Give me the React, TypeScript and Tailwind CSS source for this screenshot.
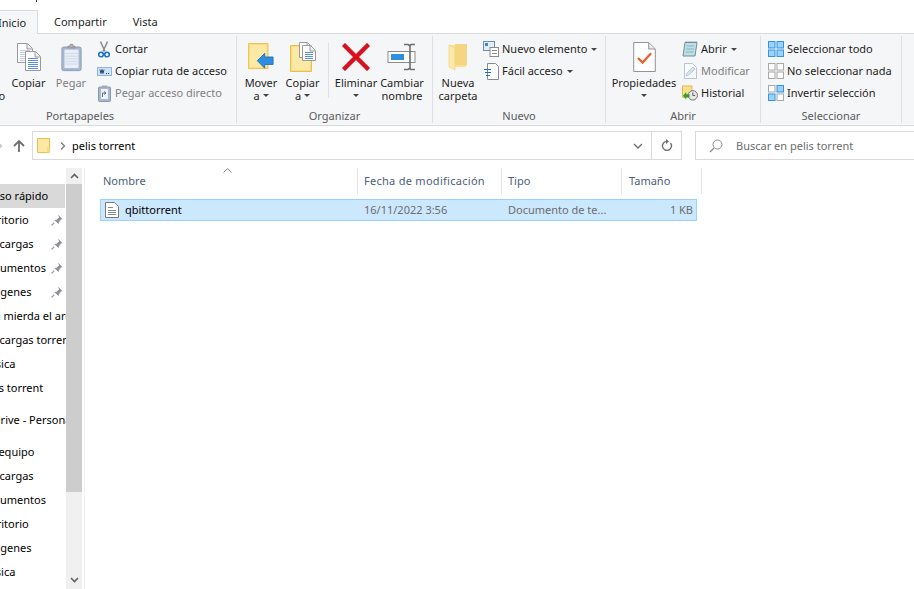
import type { ReactNode } from "react";

const Doc = ({ x, y, w = 22, h = 28, lines = "#8aa6d8", stroke = "#9a9a9a" }: { x: number; y: number; w?: number; h?: number; lines?: string; stroke?: string }) => (
  <g>
    <path d={`M${x + 0.5} ${y + 0.5}h${w - 6}l5 5v${h - 6}h-${w - 1}z`} fill="#fff" stroke={stroke} />
    <path d={`M${x + w - 6} ${y + 1}v5h5`} fill="#eee" stroke={stroke} />
    {[7, 9, 11, 13, 15, 17, 19, 21].filter((l) => l < h - 1).map((l) => (
      <path key={l} d={`M${x + 3} ${y + l}.5h${w - 6}`} stroke={lines} />
    ))}
  </g>
);

const CopyIcon = () => (
  <svg width="24" height="28" viewBox="0 0 24 28">
    <Doc x={0} y={0} w={16} h={20} lines="#c3cfe4" />
    <Doc x={8} y={8} w={16} h={20} lines="#5b8fe0" />
  </svg>
);

const PasteIcon = () => (
  <svg width="21" height="29" viewBox="0 0 24 32">
    <rect x="1" y="4" width="22" height="27" rx="2" fill="#a9b8d0" stroke="#8898b2" />
    <rect x="4" y="7" width="16" height="21" fill="#e9eef7" />
    {[11, 14, 17, 20, 23].map((l) => (
      <path key={l} d={`M5 ${l}.5h14`} stroke="#ccd6e8" />
    ))}
    <path d="M8 5V3h2.5V1h3v2H16v2z" fill="#b3b3b3" stroke="#8f8f8f" />
  </svg>
);

const Scissors = () => (
  <svg width="12" height="17" viewBox="0 0 12 17">
    <path d="M2.500 0.500l4.500 10M9.500 0.500L5 10.500" stroke="#8a8a8a" strokeWidth="1.500" fill="none" />
    <circle cx="3" cy="13.500" r="2.300" fill="none" stroke="#1f6fc4" strokeWidth="1.600" />
    <circle cx="9" cy="13.500" r="2.300" fill="none" stroke="#1f6fc4" strokeWidth="1.600" />
  </svg>
);

const PathIcon = () => (
  <svg width="15" height="9" viewBox="0 0 15 9">
    <rect x="0.5" y="0.5" width="14" height="8" fill="#cfe3f8" stroke="#8fb4dc" />
    <path d="M3 2.500l1 4 1-4 1 4 1-4" stroke="#27486e" fill="none" />
    <path d="M9 6.500h1M11 6.500h1" stroke="#27486e" />
  </svg>
);

const ShortcutIcon = () => (
  <svg width="13" height="17" viewBox="0 0 13 17">
    <rect x="0.5" y="2" width="12" height="14.5" rx="1" fill="#a9b8d0" stroke="#8898b2" />
    <rect x="3" y="4" width="7" height="10" fill="#eef2f8" />
    <path d="M4.500 12V8h3M6 6.500L8 8 6 9.500" stroke="#5f6f86" fill="none" />
    <rect x="4" y="0.5" width="5" height="2.5" fill="#aaa" />
  </svg>
);

const MoveIcon = () => (
  <svg width="26" height="28" viewBox="0 0 28 30">
    <path d="M0.5 0.5h21v27h-21z" fill="#fbdc7c" stroke="#e8c050" />
    <path d="M2 2h18v24H2z" fill="#fde9a6" />
    <path d="M10 19l8-8v4h9v8h-9v4z" fill="#2f8ee0" stroke="#1e73bd" />
  </svg>
);

const CopyToIcon = () => (
  <svg width="26" height="30" viewBox="0 0 26 30">
    <path d="M0.5 3.500h21v26h-21z" fill="#fbdc7c" stroke="#e8c050" />
    <path d="M2 5h18v23H2z" fill="#fde9a6" />
    <Doc x={9} y={0} w={14} h={16} lines="#b8c6de" />
    <Doc x={12} y={3} w={14} h={16} lines="#5b8fe0" />
  </svg>
);

const DeleteIcon = () => (
  <svg width="28" height="28" viewBox="0 0 28 28">
    <path d="M3 3l22 22M25 3L3 25" stroke="#d8111f" strokeWidth="4.4" strokeLinecap="square" />
  </svg>
);

const RenameIcon = () => (
  <svg width="30" height="28" viewBox="0 0 30 28">
    <rect x="1" y="8.5" width="27" height="11" fill="#fff" stroke="#8b8b8b" />
    <rect x="4" y="11" width="13" height="6" fill="#2f8ee0" />
    <path d="M17 1.5h4l1.5 1 1.5-1h4M23 2v24M17 26.5h4l1.5-1 1.5 1h4" stroke="#6f6f6f" strokeWidth="1.6" fill="none" />
  </svg>
);

const FolderIcon = () => (
  <svg width="20" height="28" viewBox="0 0 20 28">
    <path d="M1 2h17v22H1z" fill="#fbdf8c" />
    <path d="M7 1h12v21H7z" fill="#f5d580" />
    <path d="M1 2l6 3v22l-6-3z" fill="#fde9a6" stroke="#efd07c" strokeWidth="0.6" />
  </svg>
);

const NewItemIcon = () => (
  <svg width="16" height="16" viewBox="0 0 16 16">
    <rect x="0.5" y="0.5" width="11" height="9" fill="#e3edf8" stroke="#6f8bad" />
    <rect x="2" y="2" width="3" height="3" fill="#3a86cf" />
    <rect x="7" y="6.5" width="8.5" height="9" fill="#fff" stroke="#8a8a8a" />
    <path d="M9 9.5h5M9 12.5h5" stroke="#8a8a8a" />
  </svg>
);

const EasyAccessIcon = () => (
  <svg width="15" height="17" viewBox="0 0 15 17">
    <path d="M3.5 0.5h8l3 3v13h-11z" fill="#fff" stroke="#8a8a8a" />
    <path d="M0 6.5h7M1 9.5h6M2 12.5h4" stroke="#1f6fc4" />
  </svg>
);

const PropertiesIcon = () => (
  <svg width="23" height="30" viewBox="0 0 24 32">
    <path d="M0.5 0.5h16l7 7v24h-23z" fill="#fff" stroke="#8a8a8a" />
    <path d="M16.5 1v6.5H23" fill="#eee" stroke="#8a8a8a" />
    <path d="M5 17l5 5 9-10" stroke="#e8612c" strokeWidth="2.4" fill="none" />
  </svg>
);

const OpenIcon = () => (
  <svg width="16" height="16" viewBox="0 0 16 16">
    <path d="M3 1.5h12l-2 13.5H1z" fill="#bfe0e6" stroke="#6f8f96" />
    <path d="M4 1v-0.5M6 1v-0.5M8 1v-0.5M10 1v-0.5M12 1v-0.5M14 1v-0.5" stroke="#555" />
    <path d="M4.5 5h8M4 8h8M3.5 11h8" stroke="#88b5bd" />
  </svg>
);

const EditIcon = () => (
  <svg width="15" height="16" viewBox="0 0 15 16">
    <path d="M1.5 0.5h8l4 4v11h-12z" fill="#fafafa" stroke="#b7c4d8" />
    <path d="M3 13l1-3 6-6 2 2-6 6z" fill="#d5e2f4" stroke="#a9bbd6" strokeWidth="0.7" />
  </svg>
);

const HistoryIcon = () => (
  <svg width="17" height="16" viewBox="0 0 17 16">
    <rect x="0.5" y="0.5" width="10" height="12" fill="#fbe08a" stroke="#dcb94f" />
    <circle cx="11.5" cy="10.5" r="5" fill="#e6e6e6" stroke="#6f6f6f" />
    <path d="M11.5 7.5v3.2h2.4" stroke="#555" fill="none" />
    <path d="M1 11l3.5-4v2.2H8v3.4H4.5V15z" fill="#2f9e37" />
  </svg>
);

const SelectIcon = ({ cells }: { cells: boolean[] }) => (
  <svg width="16" height="16" viewBox="0 0 16 16">
    {[[0, 0], [8.5, 0], [0, 8.5], [8.5, 8.5]].map(([cx, cy], i) => (
      <rect
        key={i}
        x={cx + 0.5}
        y={cy + 0.5}
        width="6.5"
        height="6.5"
        fill={cells[i] ? "#9fd0f7" : "#fff"}
        stroke={cells[i] ? "#2f96e8" : "#a8a8a8"}
      />
    ))}
  </svg>
);

const Pin = () => (
  <svg width="12" height="12" viewBox="0 0 11 11">
    <path d="M6.5 0.5l4 4-1.3.6-2 2.4-.2 2-4-4 2-.2 2.4-2z" fill="#8f9499" />
    <path d="M3 8L0.5 10.5" stroke="#8f9499" />
  </svg>
);

const Caret = () => (
  <svg width="6" height="3" viewBox="0 0 6 3" className="shrink-0">
    <path d="M0 0h6L3 3z" fill="#444" />
  </svg>
);

function Large({ icon, label, sub, caret, w, disabled }: { icon: ReactNode; label: string; sub?: string; caret?: boolean; w: string; disabled?: boolean }) {
  return (
    <div className={`flex flex-col items-center shrink-0 leading-[13px] ${w} ${disabled ? "text-[#7f7f7f]" : "text-[#1e1e1e]"}`}>
      <div className="flex h-[38px] items-center justify-center">{icon}</div>
      <span className="whitespace-nowrap">{label}</span>
      <span className="flex h-[13px] items-center gap-[3px] whitespace-nowrap">
        {sub}
        {caret && <Caret />}
      </span>
    </div>
  );
}

function Small({ icon, label, caret, disabled, gap }: { icon: ReactNode; label: string; caret?: boolean; disabled?: boolean; gap: string }) {
  return (
    <div className={`flex h-[22px] items-center whitespace-nowrap ${disabled ? "text-[#7f7f7f]" : "text-[#1e1e1e]"}`}>
      <span className={`flex w-[16px] justify-center ${gap}`}>{icon}</span>
      {label}
      {caret && <span className="ml-[4px]"><Caret /></span>}
    </div>
  );
}

function Group({ label, w, children }: { label: string; w: string; children: ReactNode }) {
  return (
    <div className={`flex shrink-0 flex-col border-r border-[#dfe0e2] ${w}`}>
      <div className="flex h-[76px] flex-1 pt-[2px]">{children}</div>
      <div className="h-[15px] text-center leading-[15px] text-[#5b5b5b]">{label}</div>
    </div>
  );
}

const sideItems = [
  { t: "Acceso rápido", ml: "-ml-[24px]", hl: true, pin: false, gap: "" },
  { t: "Escritorio", ml: "-ml-[20px]", pin: true, gap: "" },
  { t: "Descargas", ml: "-ml-[20px]", pin: true, gap: "" },
  { t: "Documentos", ml: "-ml-[20px]", pin: true, gap: "" },
  { t: "Imágenes", ml: "-ml-[20px]", pin: true, gap: "" },
  { t: "Esa mierda el archivo", ml: "-ml-[17px]", pin: false, gap: "" },
  { t: "Descargas torrent", ml: "-ml-[20px]", pin: false, gap: "" },
  { t: "Música", ml: "-ml-[21px]", pin: false, gap: "" },
  { t: "pelis torrent", ml: "-ml-[20px]", pin: false, gap: "" },
  { t: "OneDrive - Personal", ml: "-ml-[29px]", pin: false, gap: "mt-[8px]" },
  { t: "Este equipo", ml: "-ml-[26px]", pin: false, gap: "mt-[8px]" },
  { t: "Descargas", ml: "-ml-[20px]", pin: false, gap: "" },
  { t: "Documentos", ml: "-ml-[20px]", pin: false, gap: "" },
  { t: "Escritorio", ml: "-ml-[20px]", pin: false, gap: "" },
  { t: "Imágenes", ml: "-ml-[20px]", pin: false, gap: "" },
  { t: "Música", ml: "-ml-[21px]", pin: false, gap: "" },
];

export default function App() {
  return (
    <div className="flex h-[589px] w-[914px] flex-col overflow-hidden bg-white text-[11px] font-['Noto_Sans','Open_Sans',sans-serif] text-[#1e1e1e]">
      {/* title bar, only a sliver is left */}
      <div className="h-[10px] shrink-0 pl-[36px]">
        <div className="h-[2px] w-px bg-[#333]" />
      </div>

      {/* tabs */}
      <div className="flex h-[24px] shrink-0 border-b border-[#dadbdc] leading-[23px]">
        <div className="-ml-[6px] -mb-px h-[24px] w-[44px] border-r border-t border-[#dadbdc] bg-[#f5f6f7] pl-[4px]">Inicio</div>
        <div className="ml-[16px]">Compartir</div>
        <div className="ml-[26px]">Vista</div>
      </div>

      {/* ribbon */}
      <div className="flex h-[92px] shrink-0 border-b border-[#dadbdc] bg-[#f5f6f7] py-[2px]">
        <Group label="Portapapeles" w="-ml-[76px] w-[313px]">
          <div className="w-[8px]" />
          <Large icon={<div className="w-[32px]" />} label="Anclar al" sub="Acceso rápido" w="w-[74px]" />
          <Large icon={<CopyIcon />} label="Copiar" w="w-[45px]" />
          <div className="w-[3px]" />
          <Large icon={<PasteIcon />} label="Pegar" w="w-[34px]" disabled />
          <div className="ml-[8px] flex flex-col">
            <Small icon={<Scissors />} label="Cortar" gap="mr-[3px]" />
            <Small icon={<PathIcon />} label="Copiar ruta de acceso" gap="mr-[3px]" />
            <Small icon={<ShortcutIcon />} label="Pegar acceso directo" disabled gap="mr-[3px]" />
          </div>
        </Group>

        <Group label="Organizar" w="w-[196px]">
          <div className="w-[3px]" />
          <Large icon={<MoveIcon />} label="Mover" sub="a" caret w="w-[42px]" />
          <Large icon={<CopyToIcon />} label="Copiar" sub="a" caret w="w-[41px]" />
          <div className="ml-[5px] mr-[3px] mt-[5px] h-[55px] w-px bg-[#dfe0e2]" />
          <Large icon={<DeleteIcon />} label="Eliminar" caret w="w-[48px]" />
          <Large icon={<RenameIcon />} label="Cambiar" sub="nombre" w="w-[44px]" />
        </Group>

        <Group label="Nuevo" w="w-[173px]">
          <div className="w-[3px]" />
          <Large icon={<FolderIcon />} label="Nueva" sub="carpeta" w="w-[44px]" />
          <div className="ml-[3px] flex flex-col">
            <Small icon={<NewItemIcon />} label="Nuevo elemento" caret gap="mr-[3px]" />
            <Small icon={<EasyAccessIcon />} label="Fácil acceso" caret gap="mr-[3px]" />
          </div>
        </Group>

        <Group label="Abrir" w="w-[155px]">
          <div className="w-[3px]" />
          <Large icon={<PropertiesIcon />} label="Propiedades" caret w="w-[70px]" />
          <div className="ml-[3px] flex flex-col">
            <Small icon={<OpenIcon />} label="Abrir" caret gap="mr-[3px]" />
            <Small icon={<EditIcon />} label="Modificar" disabled gap="mr-[3px]" />
            <Small icon={<HistoryIcon />} label="Historial" gap="mr-[3px]" />
          </div>
        </Group>

        <Group label="Seleccionar" w="w-[141px]">
          <div className="ml-[7px] flex flex-col">
            <Small icon={<SelectIcon cells={[true, true, true, true]} />} label="Seleccionar todo" gap="mr-[3px]" />
            <Small icon={<SelectIcon cells={[false, false, false, false]} />} label="No seleccionar nada" gap="mr-[3px]" />
            <Small icon={<SelectIcon cells={[false, true, true, false]} />} label="Invertir selección" gap="mr-[3px]" />
          </div>
        </Group>
      </div>

      {/* address bar */}
      <div className="mt-[5px] flex h-[29px] shrink-0 items-center">
        <div className="flex w-[32px] items-center justify-between pr-[6px]">
          <svg width="3" height="8" viewBox="0 0 3 8">
            <path d="M-2 0.500L1.500 4-2 7.500" stroke="#c4c4c4" strokeWidth="1.300" fill="none" />
          </svg>
          <svg width="14" height="14" viewBox="0 0 14 14">
            <path d="M7 13V2M2 7l5-5 5 5" stroke="#6d6d6d" strokeWidth="1.8" fill="none" />
          </svg>
        </div>
        <div className="flex h-[29px] w-[650px] items-center border border-[#d9d9d9]">
          <svg width="13" height="15" viewBox="0 0 13 15" className="ml-[4px]">
            <path d="M0.5 0.5h12v14H0.5z" fill="#fde9a6" stroke="#e8c050" />
            <path d="M10 9h2.5v5.5H10z" fill="#fbdc7c" />
          </svg>
          <svg width="6" height="8" viewBox="0 0 6 8" className="ml-[10px]">
            <path d="M1 0.5L4.5 4 1 7.5" stroke="#7a7a7a" strokeWidth="1.3" fill="none" />
          </svg>
          <span className="ml-[6px] flex-1 pt-px text-black">pelis torrent</span>
          <svg width="10" height="6" viewBox="0 0 10 6" className="mr-[8px]">
            <path d="M1 1l4 4 4-4" stroke="#6d6d6d" strokeWidth="1.3" fill="none" />
          </svg>
          <div className="flex h-full w-[30px] items-center justify-center border-l border-[#d9d9d9]">
            <svg width="12" height="13" viewBox="0 0 12 13">
              <path d="M9.5 4a4.5 4.5 0 1 1-3.500-1.700" stroke="#6d6d6d" strokeWidth="1.3" fill="none" />
              <path d="M5 0v5l3-2.500z" fill="#6d6d6d" />
            </svg>
          </div>
        </div>
        <div className="ml-[13px] flex h-[29px] flex-1 items-center border-y border-l border-[#d9d9d9] text-[#6d6d6d]">
          <svg width="14" height="14" viewBox="0 0 14 14" className="ml-[13px]">
            <circle cx="8.5" cy="5.500" r="4.500" fill="none" stroke="#8a8a8a" />
            <path d="M5 9l-4 4" stroke="#8a8a8a" strokeWidth="1.3" />
          </svg>
          <span className="ml-[13px] pt-px">Buscar en pelis torrent</span>
        </div>
      </div>

      {/* main */}
      <div className="flex min-h-0 flex-1">
        {/* nav pane */}
        <div className="w-[66px] shrink-0 overflow-hidden pt-[24px]">
          {sideItems.map((item, i) => (
            <div key={i} className={`relative flex h-[24px] items-center whitespace-nowrap text-black ${item.gap} ${item.hl ? "bg-[#d9d9d9] mr-px" : ""}`}>
              <span className={item.ml}>{item.t}</span>
              {item.pin && (
                <span className="absolute left-[51px] top-[6px]">
                  <Pin />
                </span>
              )}
            </div>
          ))}
        </div>

        {/* scrollbar */}
        <div className="mt-[8px] flex w-[16px] shrink-0 flex-col bg-[#f0f0f0]">
          <div className="flex h-[16px] shrink-0 items-center justify-center">
            <svg width="9" height="6" viewBox="0 0 9 6">
              <path d="M1 5l3.500-3.500L8 5" stroke="#606060" strokeWidth="1.6" fill="none" />
            </svg>
          </div>
          <div className="h-[308px] shrink-0 bg-[#cdcdcd]" />
          <div className="mb-[1px] mt-auto flex h-[16px] items-center justify-center">
            <svg width="9" height="6" viewBox="0 0 9 6">
              <path d="M1 1l3.500 3.500L8 1" stroke="#606060" strokeWidth="1.6" fill="none" />
            </svg>
          </div>
        </div>

        {/* file list */}
        <div className="ml-[2px] mt-[8px] flex-1 border-l border-[#f0f0f0]">
          <div className="relative ml-[14px] grid h-[24px] grid-cols-[259px_144px_120px_80px] items-center leading-[26px] text-[#4c607a]">
            <div className="h-full border-r border-[#e5e5e5] pl-[4px]">Nombre</div>
            <div className="h-full border-r border-[#e5e5e5] pl-[6px] tracking-[0.28px]">Fecha de modificación</div>
            <div className="h-full border-r border-[#e5e5e5] pl-[6px]">Tipo</div>
            <div className="h-full border-r border-[#e5e5e5] pl-[7px]">Tamaño</div>
            <svg width="9" height="5" viewBox="0 0 9 5" className="absolute left-[124px] top-0">
              <path d="M0.500 4.500l4-4 4 4" stroke="#8a8a8a" fill="none" />
            </svg>
          </div>
          <div className="ml-[15px] mt-[7px] grid h-[22px] w-[597px] grid-cols-[256px_144px_120px_1fr] items-center border border-[#99d1ff] bg-[#cce8ff]">
            <div className="flex items-center pl-[4px] text-black">
              <svg width="14" height="16" viewBox="0 0 14 16">
                <path d="M0.500 0.500h9l4 4v11h-13z" fill="#fff" stroke="#7a7a7a" />
                <path d="M3 5.500h5M3 8.500h8M3 10.500h8M3 12.500h8" stroke="#8a8a8a" />
              </svg>
              <span className="ml-[6px]">qbittorrent</span>
            </div>
            <div className="pl-[7px] text-[#6d6d6d]">16/11/2022 3:56</div>
            <div className="pl-[7px] text-[#6d6d6d]">Documento de te...</div>
            <div className="pr-[3px] text-right text-[#6d6d6d]">1 KB</div>
          </div>
        </div>
      </div>
    </div>
  );
}
